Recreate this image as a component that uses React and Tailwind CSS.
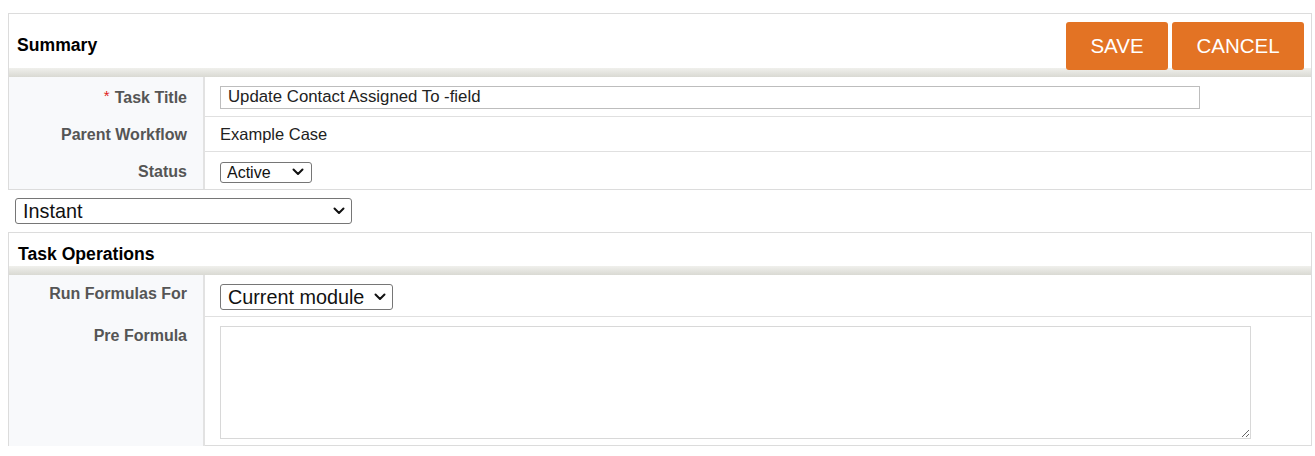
import React from "react";

const font = { fontFamily: '"Liberation Sans", Arial, sans-serif' };

function Chevron({ className }) {
  return (
    <svg className={className} width="12" height="8" viewBox="0 0 12 8" fill="none">
      <path d="M1.5 1.5 L6 6 L10.5 1.5" stroke="#111" strokeWidth="2" strokeLinecap="round" strokeLinejoin="round" />
    </svg>
  );
}

function Select({ value, options, className, textClass, chevronClass }) {
  return (
    <div className={"relative " + className}>
      <select
        defaultValue={value}
        className={"appearance-none w-full h-full border border-[#767676] rounded-[3px] bg-white text-[#111] outline-none " + textClass}
      >
        {options.map((o) => (
          <option key={o}>{o}</option>
        ))}
      </select>
      <Chevron className={"absolute pointer-events-none " + chevronClass} />
    </div>
  );
}

function Band() {
  return <div className="h-[9px] bg-linear-to-b from-[#f0f0ec] to-[#d9d9d3]" />;
}

function Label({ children, top }) {
  return (
    <div
      className={
        "w-[196px] shrink-0 bg-[#f8f9fb] border-r-2 border-[#e2e2e2] text-right pr-[16px] text-[16px] font-bold text-[#555] flex justify-end " +
        (top ? "items-start" : "items-center")
      }
    >
      {children}
    </div>
  );
}

export default function App() {
  return (
    <div className="bg-white w-[1315px] h-[456px] pl-[8px] pt-[13px]" style={font}>
      {/* Panel 1 */}
      <div className="w-[1304px] border border-[#dcdcdc]">
        <div className="h-[54px] flex justify-between items-start pl-[8px] pr-[7px] pt-[8px]">
          <div className="text-[17.6px] font-bold text-black mt-[10px]">Summary</div>
          <div className="flex gap-[4px] relative z-10">
            <button className="w-[102px] h-[48px] bg-[#e37324] rounded-[3px] text-white text-[20.5px]">SAVE</button>
            <button className="w-[132px] h-[48px] bg-[#e37324] rounded-[3px] text-white text-[20.5px]">CANCEL</button>
          </div>
        </div>
        <Band />
        <div className="flex h-[40px]">
          <Label>
            <span className="pt-[2px]">
              <span className="text-[#e02020] font-normal text-[15px] mr-[5px] relative top-[-2px]">*</span>Task Title
            </span>
          </Label>
          <div className="flex-1 border-b border-[#e0e0e0] flex items-center pl-[15px] pt-[1px]">
            <input
              defaultValue="Update Contact Assigned To -field"
              className="w-[980px] h-[23px] border border-[#bdbdbd] px-[7px] text-[16.8px] text-[#222] outline-none"
            />
          </div>
        </div>
        <div className="flex h-[35px]">
          <Label>
            <span className="pt-[1px]">Parent Workflow</span>
          </Label>
          <div className="flex-1 border-b border-[#e0e0e0] flex items-center pl-[15px] pt-[1px] text-[16.5px] text-[#222]">
            Example Case
          </div>
        </div>
        <div className="flex h-[37px]">
          <Label>
            <span className="pt-[2px]">Status</span>
          </Label>
          <div className="flex-1 flex items-center pl-[15px] pt-[1px]">
            <Select
              value="Active"
              options={["Active", "Inactive"]}
              className="w-[92px] h-[21px]"
              textClass="pl-[6px] text-[16px] leading-[19px]"
              chevronClass="right-[8px] top-[7px]"
            />
          </div>
        </div>
      </div>

      {/* Instant */}
      <div className="pl-[7px] pt-[8px] pb-[8px]">
        <Select
          value="Instant"
          options={["Instant", "Scheduled"]}
          className="w-[337px] h-[26px]"
          textClass="pl-[7px] text-[19.8px] leading-[24px]"
          chevronClass="right-[7px] top-[9px]"
        />
      </div>

      {/* Panel 2 */}
      <div className="w-[1304px] border-x border-t border-[#dcdcdc]">
        <div className="h-[33px] flex items-start pl-[9px] pt-[11px]">
          <div className="text-[17.6px] font-bold text-black leading-[20px]">Task Operations</div>
        </div>
        <Band />
        <div className="flex h-[42px]">
          <Label top>
            <span className="pt-[7px]">Run Formulas For</span>
          </Label>
          <div className="flex-1 border-b border-[#e0e0e0] flex items-start pt-[9px] pl-[15px]">
            <Select
              value="Current module"
              options={["Current module", "Related module"]}
              className="w-[173px] h-[26px]"
              textClass="pl-[7px] text-[19.8px] leading-[24px]"
              chevronClass="right-[7px] top-[9px]"
            />
          </div>
        </div>
        <div className="flex h-[129px]">
          <Label top>
            <span className="pt-[7px]">Pre Formula</span>
          </Label>
          <div className="flex-1 border-b border-[#dcdcdc] pt-[9px] pl-[15px]">
            <textarea className="block w-[1031px] h-[113px] border border-[#d8d8d8] outline-none" />
          </div>
        </div>
      </div>
    </div>
  );
}
